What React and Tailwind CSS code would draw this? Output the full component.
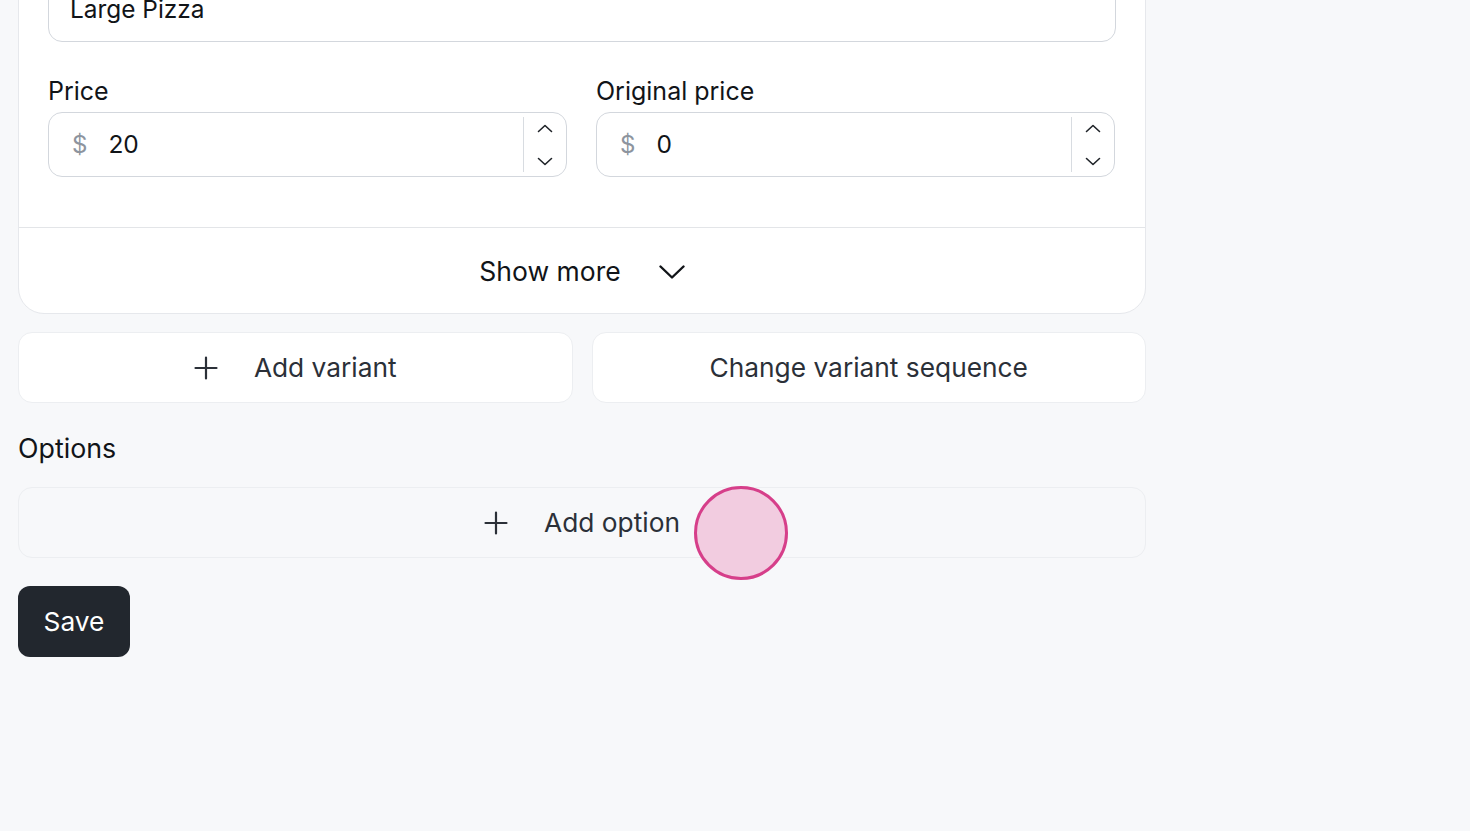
import React from "react";

const font = { fontFamily: "Inter, 'Noto Sans', 'Liberation Sans', sans-serif" };

function Plus() {
  return (
    <svg width="24" height="24" viewBox="0 0 24 24" fill="none" stroke="#2b3038" strokeWidth="2.2" strokeLinecap="round">
      <path d="M12 1.5v21M1.5 12h21" />
    </svg>
  );
}

function SmallChevron({ up }) {
  return (
    <svg width="16" height="9" viewBox="0 0 16 9" fill="none" stroke="#1f2328" strokeWidth="1.6" strokeLinecap="round" strokeLinejoin="round">
      {up ? <path d="M1.5 7.5 8 1.5l6.5 6" /> : <path d="M1.5 1.5 8 7.5l6.5-6" />}
    </svg>
  );
}

function PriceInput({ value }) {
  return (
    <div className="flex h-[65px] items-stretch rounded-[14px] border border-[#d3d7dd] bg-white">
      <div className="flex flex-1 items-center pl-[23px]">
        <span className="text-[24px] text-[#8d949e]">$</span>
        <span className="ml-[21px] text-[24.5px] text-[#111418]">{value}</span>
      </div>
      <div className="my-[4px] w-px bg-[#d8dce1]" />
      <div className="flex w-[42px] flex-col items-center justify-center gap-[24px]">
        <SmallChevron up />
        <SmallChevron />
      </div>
    </div>
  );
}

export default function App() {
  return (
    <div style={font} className="relative h-[831px] w-[1470px] overflow-hidden bg-[#f7f8fa] pl-[18px]">
      <div className="mt-[-54px] w-[1128px] rounded-[26px] border border-[#e6e8ec] bg-white">
        <div className="px-[29px] pt-[30px] pb-[50px]">
          <div className="flex h-[65px] items-center rounded-[14px] border border-[#d3d7dd] pl-[21px] text-[24.4px] text-[#111418]">
            Large Pizza
          </div>
          <div className="mt-[34px] grid grid-cols-[519px_519px] gap-x-[29px]">
            <div>
              <div className="mb-[6px] text-[25px] leading-[30px] text-[#111418]">Price</div>
              <PriceInput value="20" />
            </div>
            <div>
              <div className="mb-[6px] text-[25px] leading-[30px] text-[#111418]">Original price</div>
              <PriceInput value="0" />
            </div>
          </div>
        </div>
        <div className="flex h-[86px] items-center justify-center gap-[38px] border-t border-[#e3e5e8] pt-[2px]">
          <span className="text-[26.5px] text-[#111418]">Show more</span>
          <svg width="26" height="14" viewBox="0 0 26 14" fill="none" stroke="#111418" strokeWidth="2.4" strokeLinecap="round" strokeLinejoin="round">
            <path d="M1.5 1.5 13 12.5 24.5 1.5" />
          </svg>
        </div>
      </div>

      <div className="mt-[18px] grid w-[1128px] grid-cols-2 gap-x-[19px]">
        <button className="flex h-[71px] items-center justify-center gap-[36px] rounded-[14px] border border-[#eceef1] bg-white text-[26.3px] text-[#2b3038]">
          <Plus />
          <span>Add variant</span>
        </button>
        <button className="flex h-[71px] items-center justify-center rounded-[14px] border border-[#eceef1] bg-white text-[26.3px] text-[#2b3038]">
          Change variant sequence
        </button>
      </div>

      <div className="mt-[29px] text-[26.8px] leading-[32px] text-[#111418]">Options</div>

      <button className="mt-[23px] flex h-[71px] w-[1128px] items-center justify-center gap-[36px] rounded-[14px] border border-[#eceef1] bg-[#f7f8fa] text-[26.3px] text-[#2b3038]">
        <Plus />
        <span>Add option</span>
      </button>

      <button className="mt-[28px] flex h-[71px] w-[112px] items-center justify-center rounded-[12px] bg-[#22272e] text-[26.3px] text-white">
        Save
      </button>

      <div className="absolute left-[694px] top-[486px] h-[94px] w-[94px] rounded-full border-[3px] border-[#d63f8a] bg-[#f2cce0]" />
    </div>
  );
}
